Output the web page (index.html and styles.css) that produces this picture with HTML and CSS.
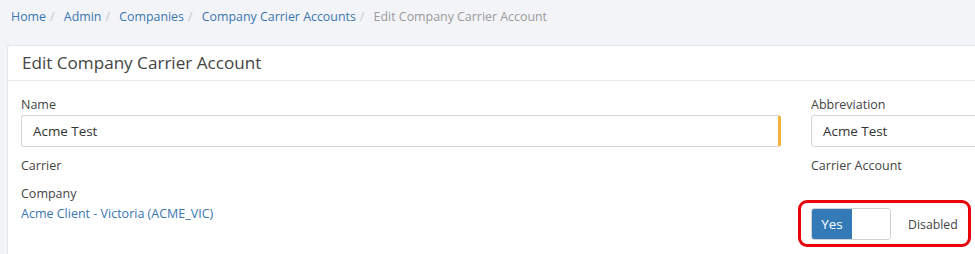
FILE: index.html
```html
<!DOCTYPE html>
<html lang="en">
<head>
<meta charset="utf-8">
<title>Edit Company Carrier Account</title>
<link rel="stylesheet" href="styles.css">
</head>
<body>
<nav class="crumbs">
  <a href="#">Home</a><span class="sep">/</span>
  <a href="#">Admin</a><span class="sep">/</span>
  <a href="#">Companies</a><span class="sep">/</span>
  <a href="#">Company Carrier Accounts</a><span class="sep">/</span>
  <span class="active">Edit Company Carrier Account</span>
</nav>
<section class="card">
  <header class="card-head">Edit Company Carrier Account</header>
  <div class="card-body">
    <div class="col">
      <label class="lbl">Name</label>
      <div class="input input-warn">Acme Test</div>
      <div class="lbl lbl-gap">Carrier</div>
      <div class="lbl lbl-gap2">Company</div>
      <a class="link" href="#">Acme Client - Victoria (ACME_VIC)</a>
    </div>
    <div class="col">
      <label class="lbl">Abbreviation</label>
      <div class="input">Acme Test</div>
      <div class="lbl lbl-gap">Carrier Account</div>
      <div class="highlight">
        <div class="switch"><span class="switch-on">Yes</span><span class="switch-off"></span></div>
        <span class="state">Disabled</span>
      </div>
    </div>
  </div>
</section>
</body>
</html>
```
FILE: styles.css
```css
html, body {
  margin: 0;
  padding: 0;
  overflow: hidden;
  background: #f3f4f8;
  font-family: "Open Sans", "Noto Sans", sans-serif;
  color: #444;
}
.crumbs {
  padding: 8px 11px 0;
  font-size: 12.4px;
  line-height: 18px;
  height: 27px;
  white-space: nowrap;
}
.crumbs a {
  color: #3a76b0;
  text-decoration: none;
}
.crumbs .sep {
  color: #c6c8cc;
  padding: 0 6px 0 4px;
}
.crumbs .active {
  color: #9a9a9a;
}
.card {
  margin: 10px 0 0 7px;
  width: 968px;
  height: 209px;
  background: #fff;
  border: 1px solid #e4e6eb;
  border-right: 0;
  border-bottom: 0;
  border-radius: 3px 0 0 0;
  overflow: hidden;
}
.card-head {
  padding: 5px 14px;
  font-size: 17.1px;
  line-height: 24px;
  color: #444;
  border-bottom: 1px solid #e8eaee;
}
.card-body {
  display: grid;
  grid-template-columns: 760px 280px;
  column-gap: 30px;
  padding: 14px 13px 0;
}
.col {
  display: flex;
  flex-direction: column;
  align-items: flex-start;
}
.lbl {
  font-size: 12.5px;
  line-height: 20px;
  color: #444;
}
.lbl-gap { margin-top: 9px; }
.lbl-gap2 { margin-top: 8px; }
.input {
  box-sizing: border-box;
  align-self: stretch;
  height: 32px;
  padding: 0 11px;
  border: 1px solid #d2d4d8;
  border-radius: 3px;
  font-size: 13.4px;
  line-height: 30px;
  color: #333;
}
.input-warn {
  border-right: 3px solid #f1b33c;
}
.link {
  font-size: 12.5px;
  line-height: 20px;
  color: #3a76b0;
  text-decoration: none;
}
.highlight {
  box-sizing: border-box;
  width: 173px;
  margin: 24px 0 0 -13px;
  padding: 5px 0 4px 10px;
  border: 3px solid #e8000b;
  border-radius: 9px;
  display: flex;
  align-items: center;
}
.switch {
  display: flex;
  box-sizing: border-box;
  width: 80px;
  height: 32px;
  border: 1px solid #cfd1d5;
  border-radius: 3px;
  overflow: hidden;
}
.switch-on {
  width: 40px;
  background: #337ab7;
  color: #fff;
  font-size: 13.4px;
  line-height: 30px;
  text-align: center;
}
.switch-off {
  flex: 1;
  background: #fff;
}
.state {
  margin-left: 17px;
  font-size: 12.3px;
  color: #444;
}
```
